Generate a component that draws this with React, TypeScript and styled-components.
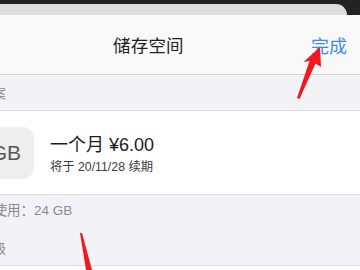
import React from 'react';
import styled, { createGlobalStyle } from 'styled-components';

const GlobalStyle = createGlobalStyle`
  html, body {
    margin: 0;
    padding: 0;
    background: #232323;
  }
  body {
    font-family: "Liberation Sans", "Noto Sans CJK SC", sans-serif;
    overflow: hidden;
  }
`;

const Screen = styled.div`
  position: relative;
  width: 360px;
  height: 270px;
  overflow: hidden;
  background: #232323;
  padding-top: 4px;
  box-sizing: border-box;
`;

const BackCard = styled.div`
  width: 347px;
  height: 11px;
  background: #dedede;
  border-top-right-radius: 12px;
`;

const Sheet = styled.div`
  background: #f2f2f7;
  height: 260px;
`;

const NavBar = styled.div`
  display: flex;
  align-items: center;
  height: 59px;
  background: #f9f9f9;
  border-bottom: 1px solid #d2d2d4;
`;

const NavTitle = styled.div`
  flex: 1;
  padding-left: 113px;
  font-size: 17.5px;
  color: #1e1e1e;
  letter-spacing: 0.2px;
`;

const DoneButton = styled.div`
  padding-right: 13px;
  font-size: 18px;
  color: #4188f2;
`;

const Inset = styled.div`
  margin-left: -36px;
`;

const SectionHeader = styled.div<{ $height: number }>`
  height: ${(p) => p.$height}px;
  display: flex;
  align-items: flex-end;
  padding: 0 0 8px 16px;
  box-sizing: border-box;
  font-size: 13px;
  color: #8a8a8e;
`;

const Cell = styled.div`
  display: flex;
  align-items: center;
  gap: 16px;
  height: 83px;
  padding-left: 16px;
  background: #ffffff;
  border-top: 1px solid #dcdcdf;
  border-bottom: 1px solid #dcdcdf;
`;

const PlanIcon = styled.div`
  width: 54px;
  height: 52px;
  border-radius: 12px;
  background: #eeeeef;
  display: flex;
  align-items: center;
  justify-content: flex-end;
  padding-right: 13px;
  box-sizing: border-box;
  overflow: hidden;
  white-space: nowrap;
  font-size: 21px;
  color: #58585a;
`;

const PlanText = styled.div`
  display: flex;
  flex-direction: column;
  gap: 1px;
`;

const PlanTitle = styled.div`
  font-size: 18px;
  color: #1c1c1e;
`;

const PlanSub = styled.div`
  font-size: 12.3px;
  color: #3c3c40;
`;

const Footer = styled.div<{ $height: number }>`
  height: ${(p) => p.$height}px;
  display: flex;
  align-items: center;
  padding-left: 16px;
  font-size: 13.5px;
  color: #8a8a8e;
`;

const WhiteBlock = styled.div`
  height: 20px;
  background: #ffffff;
  border-top: 1px solid #dcdcdf;
`;

const Overlay = styled.svg`
  position: absolute;
  left: 0;
  top: 0;
  pointer-events: none;
`;

export default function App() {
  return (
    <>
      <GlobalStyle />
      <Screen>
        <BackCard />
        <Sheet>
          <NavBar>
            <NavTitle>储存空间</NavTitle>
            <DoneButton>完成</DoneButton>
          </NavBar>
          <Inset>
            <SectionHeader $height={35}>方案</SectionHeader>
            <Cell>
              <PlanIcon>50GB</PlanIcon>
              <PlanText>
                <PlanTitle>一个月 ¥6.00</PlanTitle>
                <PlanSub>将于 20/11/28 续期</PlanSub>
              </PlanText>
            </Cell>
            <Footer $height={28}>已使用：24 GB</Footer>
            <SectionHeader $height={42}>升级</SectionHeader>
            <WhiteBlock />
          </Inset>
        </Sheet>
        <Overlay width="360" height="270" viewBox="0 0 360 270">
          <polygon points="320,47 321,67 315.5,63.5 299.5,99 297,98 309.5,61 303.5,62" fill="#f0191e" />
          <polygon points="80,233 82,233 92,270 86,270" fill="#f0191e" />
        </Overlay>
      </Screen>
    </>
  );
}
